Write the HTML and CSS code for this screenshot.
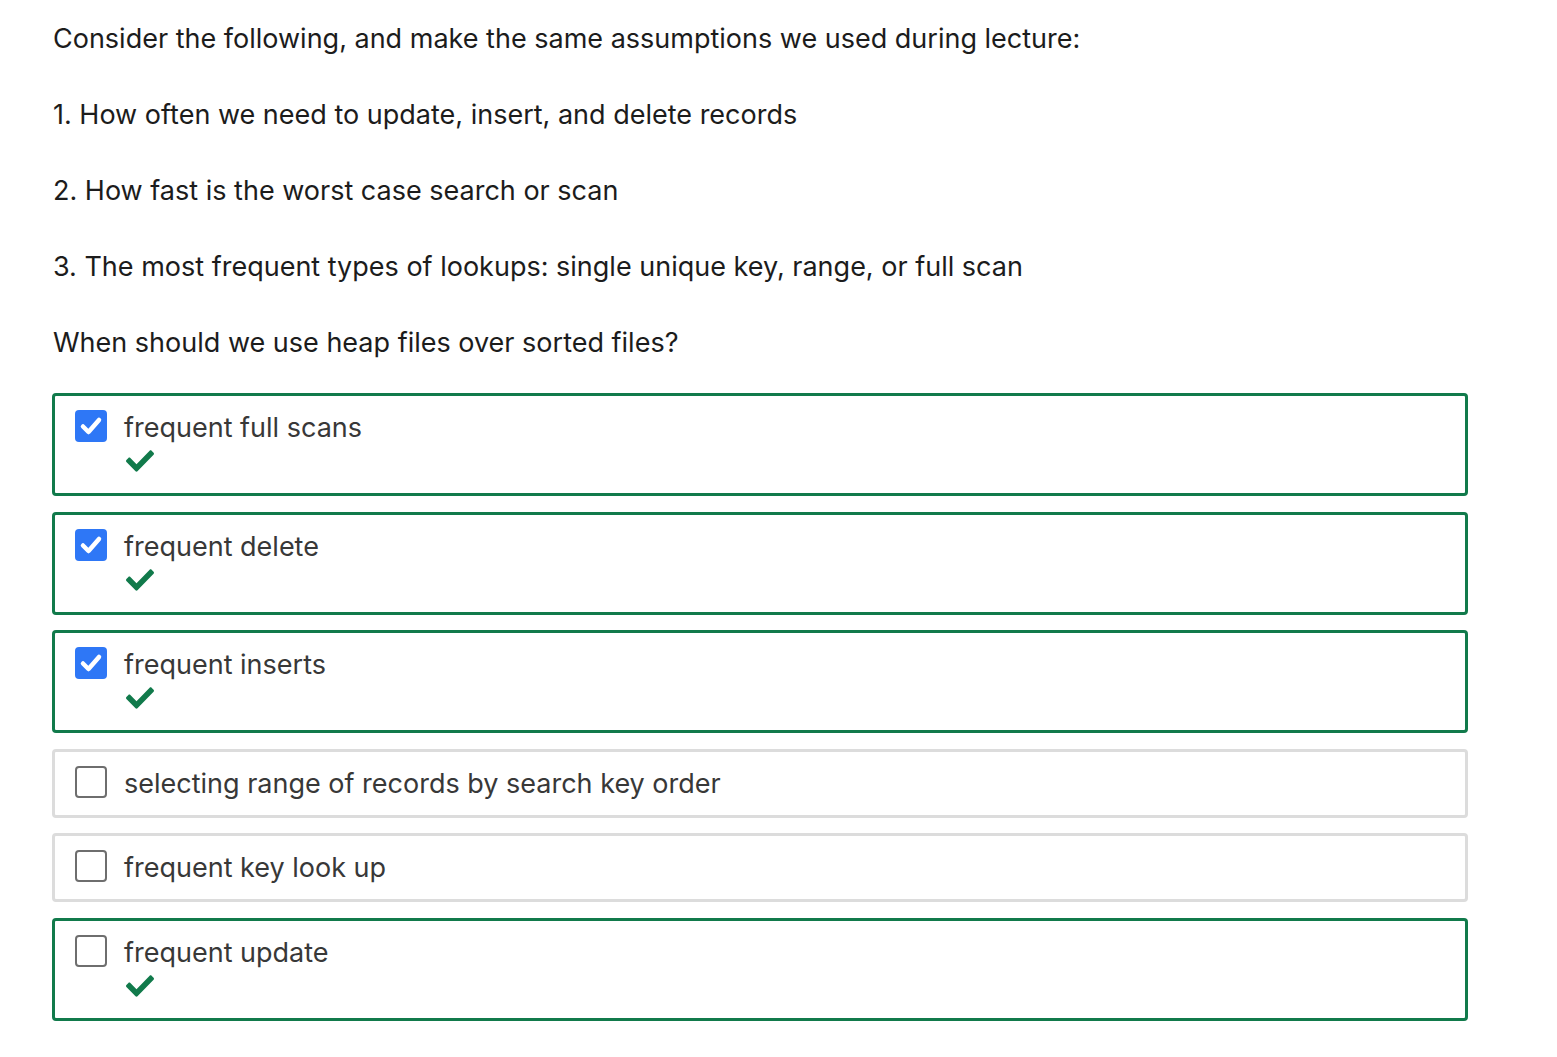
FILE: index.html
```html
<!DOCTYPE html>
<html>
<head>
<meta charset="utf-8">
<link rel="stylesheet" href="styles.css">
</head>
<body>
<div class="page">
  <p class="para">Consider the following, and make the same assumptions we used during lecture:</p>
  <p class="para">1. How often we need to update, insert, and delete records</p>
  <p class="para">2. How fast is the worst case search or scan</p>
  <p class="para">3. The most frequent types of lookups: single unique key, range, or full scan</p>
  <p class="para">When should we use heap files over sorted files?</p>

  <div class="options">
    <div class="option correct">
      <span class="box checked"><svg viewBox="0 0 32 32" width="32" height="32"><path d="M8 16.5 L13.5 22 L24 10" fill="none" stroke="#fff" stroke-width="4.5" stroke-linecap="round" stroke-linejoin="round"/></svg></span>
      <div class="body">
        <div class="label">frequent full scans</div>
        <svg class="mark" viewBox="0 60 512 392" width="28" height="22" preserveAspectRatio="none"><path fill="#117a4b" d="M173.898 439.404l-166.4-166.4c-9.997-9.997-9.997-26.206 0-36.204l36.203-36.204c9.997-9.998 26.207-9.998 36.204 0L192 312.690 432.095 72.596c9.997-9.997 26.207-9.997 36.204 0l36.203 36.204c9.997 9.997 9.997 26.206 0 36.204l-294.4 294.401c-9.998 9.997-26.207 9.997-36.204-.001z"/></svg>
      </div>
    </div>
    <div class="option correct">
      <span class="box checked"><svg viewBox="0 0 32 32" width="32" height="32"><path d="M8 16.5 L13.5 22 L24 10" fill="none" stroke="#fff" stroke-width="4.5" stroke-linecap="round" stroke-linejoin="round"/></svg></span>
      <div class="body">
        <div class="label">frequent delete</div>
        <svg class="mark" viewBox="0 60 512 392" width="28" height="22" preserveAspectRatio="none"><path fill="#117a4b" d="M173.898 439.404l-166.4-166.4c-9.997-9.997-9.997-26.206 0-36.204l36.203-36.204c9.997-9.998 26.207-9.998 36.204 0L192 312.690 432.095 72.596c9.997-9.997 26.207-9.997 36.204 0l36.203 36.204c9.997 9.997 9.997 26.206 0 36.204l-294.4 294.401c-9.998 9.997-26.207 9.997-36.204-.001z"/></svg>
      </div>
    </div>
    <div class="option correct">
      <span class="box checked"><svg viewBox="0 0 32 32" width="32" height="32"><path d="M8 16.5 L13.5 22 L24 10" fill="none" stroke="#fff" stroke-width="4.5" stroke-linecap="round" stroke-linejoin="round"/></svg></span>
      <div class="body">
        <div class="label">frequent inserts</div>
        <svg class="mark" viewBox="0 60 512 392" width="28" height="22" preserveAspectRatio="none"><path fill="#117a4b" d="M173.898 439.404l-166.4-166.4c-9.997-9.997-9.997-26.206 0-36.204l36.203-36.204c9.997-9.998 26.207-9.998 36.204 0L192 312.690 432.095 72.596c9.997-9.997 26.207-9.997 36.204 0l36.203 36.204c9.997 9.997 9.997 26.206 0 36.204l-294.4 294.401c-9.998 9.997-26.207 9.997-36.204-.001z"/></svg>
      </div>
    </div>
    <div class="option">
      <span class="box"></span>
      <div class="body">
        <div class="label">selecting range of records by search key order</div>
      </div>
    </div>
    <div class="option">
      <span class="box"></span>
      <div class="body">
        <div class="label">frequent key look up</div>
      </div>
    </div>
    <div class="option correct">
      <span class="box"></span>
      <div class="body">
        <div class="label">frequent update</div>
        <svg class="mark" viewBox="0 60 512 392" width="28" height="22" preserveAspectRatio="none"><path fill="#117a4b" d="M173.898 439.404l-166.4-166.4c-9.997-9.997-9.997-26.206 0-36.204l36.203-36.204c9.997-9.998 26.207-9.998 36.204 0L192 312.690 432.095 72.596c9.997-9.997 26.207-9.997 36.204 0l36.203 36.204c9.997 9.997 9.997 26.206 0 36.204l-294.4 294.401c-9.998 9.997-26.207 9.997-36.204-.001z"/></svg>
      </div>
    </div>
  </div>
</div>
</body>
</html>
```

FILE: styles.css
```css
html, body {
  margin: 0;
  padding: 0;
  background: #ffffff;
}
.page {
  padding: 21px 0 0 52px;
  width: 1416px;
  font-family: Inter, "Noto Sans", sans-serif;
  color: #1c1c1c;
}
.para {
  margin: 0 0 40px 1px;
  font-size: 27px;
  line-height: 36px;
}
.para:last-of-type {
  margin-bottom: 32px;
}
.options {
  display: flex;
  flex-direction: column;
  gap: 15.5px;
}
.option {
  display: flex;
  gap: 17px;
  border: 3px solid #dcdcdc;
  border-radius: 4px;
  padding: 14px 20px 15px;
}
.option.correct {
  border-color: #117a4b;
  padding-bottom: 21px;
}
.box {
  flex: none;
  width: 32px;
  height: 32px;
  box-sizing: border-box;
  border: 2px solid #6e6e6e;
  border-radius: 4px;
  background: #fff;
  display: flex;
}
.box.checked {
  border: none;
  background: #2e77f6;
}
.body {
  display: flex;
  flex-direction: column;
}
.label {
  font-size: 27px;
  line-height: 32px;
  color: #383838;
  padding-top: 2px;
}
.mark {
  display: block;
  margin-top: 6px;
  margin-left: 2px;
}
```
